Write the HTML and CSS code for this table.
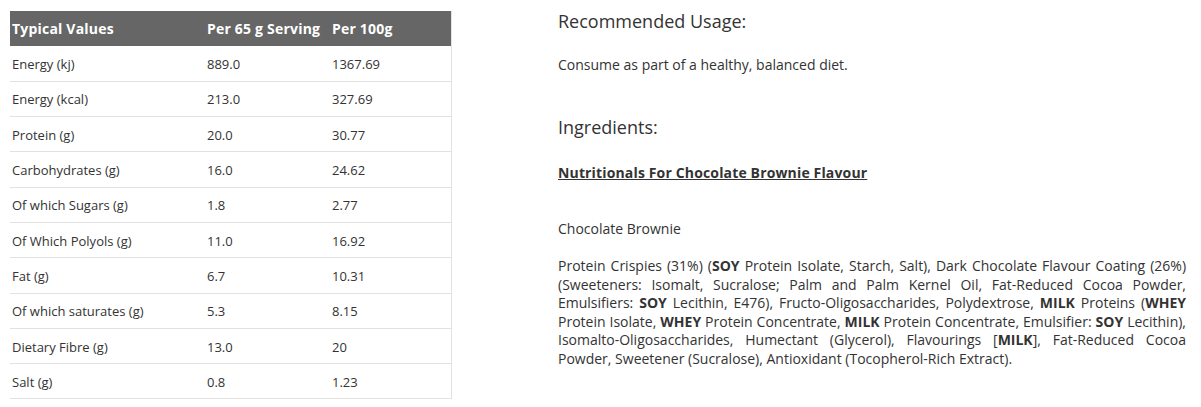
FILE: index.html
```html
<!DOCTYPE html>
<html>
<head>
<meta charset="utf-8">
<link rel="stylesheet" href="styles.css">
</head>
<body>
<div class="page">
  <div class="left">
    <table class="nutri">
      <thead>
        <tr><th class="c1">Typical Values</th><th class="c2">Per 65 g Serving</th><th class="c3">Per 100g</th></tr>
      </thead>
      <tbody>
        <tr><td>Energy (kj)</td><td>889.0</td><td>1367.69</td></tr>
        <tr><td>Energy (kcal)</td><td>213.0</td><td>327.69</td></tr>
        <tr><td>Protein (g)</td><td>20.0</td><td>30.77</td></tr>
        <tr><td>Carbohydrates (g)</td><td>16.0</td><td>24.62</td></tr>
        <tr><td>Of which Sugars (g)</td><td>1.8</td><td>2.77</td></tr>
        <tr><td>Of Which Polyols (g)</td><td>11.0</td><td>16.92</td></tr>
        <tr><td>Fat (g)</td><td>6.7</td><td>10.31</td></tr>
        <tr><td>Of which saturates (g)</td><td>5.3</td><td>8.15</td></tr>
        <tr><td>Dietary Fibre (g)</td><td>13.0</td><td>20</td></tr>
        <tr><td>Salt (g)</td><td>0.8</td><td>1.23</td></tr>
      </tbody>
    </table>
  </div>
  <div class="right">
    <h3 class="heading">Recommended Usage:</h3>
    <p class="usage">Consume as part of a healthy, balanced diet.</p>
    <h3 class="heading ingr">Ingredients:</h3>
    <p class="subtitle">Nutritionals For Chocolate Brownie Flavour</p>
    <p class="flavour">Chocolate Brownie</p>
    <p class="ingredients">Protein Crispies (31%) (<b>SOY</b> Protein Isolate, Starch, Salt), Dark Chocolate Flavour Coating (26%) (Sweeteners: Isomalt, Sucralose; Palm and Palm Kernel Oil, Fat-Reduced Cocoa Powder, Emulsifiers: <b>SOY</b> Lecithin, E476), Fructo-Oligosaccharides, Polydextrose, <b>MILK</b> Proteins (<b>WHEY</b> Protein Isolate, <b>WHEY</b> Protein Concentrate, <b>MILK</b> Protein Concentrate, Emulsifier: <b>SOY</b> Lecithin), Isomalto-Oligosaccharides, Humectant (Glycerol), Flavourings [<b>MILK</b>], Fat-Reduced Cocoa Powder, Sweetener (Sucralose), Antioxidant (Tocopherol-Rich Extract).</p>
  </div>
</div>
</body>
</html>
```

FILE: styles.css
```css
html, body {
  margin: 0;
  padding: 0;
  background: #fff;
}
body {
  font-family: "Open Sans", "Liberation Sans", sans-serif;
  color: #333;
}
.page {
  display: flex;
  padding: 11px 0 0 10px;
}
.left {
  width: 442px;
  flex: none;
}
.nutri {
  width: 442px;
  border-collapse: collapse;
  table-layout: fixed;
  font-size: 13px;
  border-right: 1px solid #e2e2e2;
}
.nutri th {
  background: #666;
  color: #fff;
  font-weight: 700;
  font-size: 14px;
  letter-spacing: 0.2px;
  text-align: left;
  height: 35px;
  padding: 0 0 0 2px;
  white-space: nowrap;
}
.nutri .c1 { width: 193px; }
.nutri .c2 { width: 123px; }
.nutri td {
  height: 35.3px;
  box-sizing: border-box;
  padding: 1px 0 0 2px;
  border-bottom: 1px solid #e2e2e2;
  color: #333;
  vertical-align: middle;
  line-height: 16px;
}
.right {
  width: 628px;
  margin-left: 106px;
  flex: none;
}
.heading {
  font-size: 18px;
  font-weight: 400;
  margin: 0;
  line-height: 20px;
  color: #333;
}
.usage {
  font-size: 14px;
  margin: 24px 0 0;
  line-height: 19px;
}
.ingr {
  margin-top: 43px;
}
.subtitle {
  font-size: 14px;
  font-weight: 700;
  text-decoration: underline;
  letter-spacing: 0.15px;
  margin: 26px 0 0;
  line-height: 19px;
}
.flavour {
  font-size: 14px;
  margin: 37px 0 0;
  line-height: 19px;
}
.ingredients {
  font-size: 14px;
  margin: 19px 0 0;
  line-height: 18.6px;
  text-align: justify;
}
.ingredients b {
  font-weight: 700;
}
```
